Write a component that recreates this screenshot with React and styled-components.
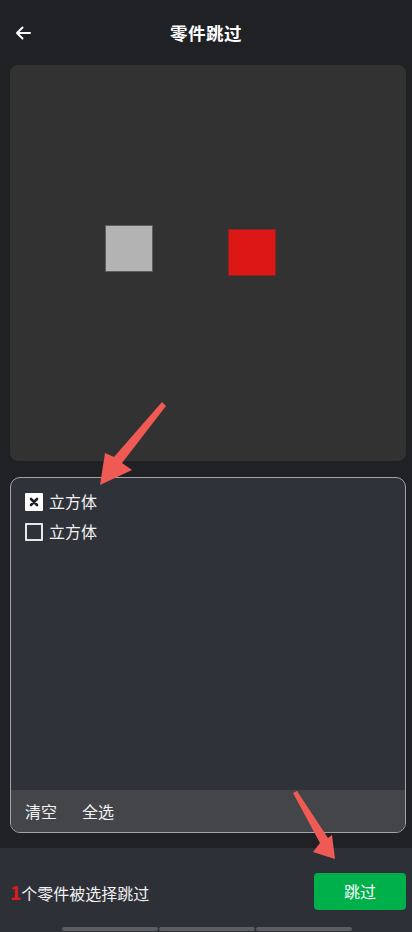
import styled, { createGlobalStyle } from "styled-components";

const GlobalStyle = createGlobalStyle`
  body {
    margin: 0;
    background: #1f2125;
    font-family: "Noto Sans CJK SC", "Noto Sans", sans-serif;
  }
`;

const Page = styled.div`
  position: relative;
  width: 412px;
  height: 932px;
  display: flex;
  flex-direction: column;
  background: #1f2125;
  color: #fff;
  overflow: hidden;
`;

const Header = styled.div`
  height: 65px;
  display: flex;
  align-items: center;
  justify-content: center;
  position: relative;
`;

const Back = styled.div`
  position: absolute;
  left: 14px;
  top: 24px;
  width: 18px;
  height: 18px;
  display: flex;
`;

const Title = styled.h1`
  margin: 0;
  font-size: 17.5px;
  font-weight: 700;
  letter-spacing: 0.5px;
`;

const Main = styled.div`
  padding: 0 6px 0 10px;
  display: flex;
  flex-direction: column;
  gap: 16px;
`;

const Viewport = styled.div`
  position: relative;
  height: 396px;
  background: #323232;
  border-radius: 8px;
`;

const Cube = styled.div`
  position: absolute;
  left: ${(p) => p.$x}px;
  top: ${(p) => p.$y}px;
  width: 48px;
  height: 47px;
  box-sizing: border-box;
  background: ${(p) => p.$color};
  border: 1px solid ${(p) => p.$edge};
`;

const ListPanel = styled.div`
  height: 356px;
  box-sizing: border-box;
  border: 1px solid #a3a4a8;
  border-radius: 10px;
  background: #30323a;
  display: flex;
  flex-direction: column;
  overflow: hidden;
`;

const Items = styled.div`
  flex: 1;
  padding: 14px 14px 0;
  display: flex;
  flex-direction: column;
  gap: 11px;
`;

const Item = styled.div`
  display: flex;
  align-items: center;
  gap: 6px;
  font-size: 16px;
  line-height: 19px;
  color: #f2f2f2;
`;

const Box = styled.div`
  width: 18px;
  height: 18px;
  box-sizing: border-box;
  border-radius: 1px;
  display: flex;
  align-items: center;
  justify-content: center;
  background: ${(p) => (p.$checked ? "#ffffff" : "transparent")};
  border: ${(p) => (p.$checked ? "none" : "2px solid #e8e8e8")};
`;

const ListFooter = styled.div`
  height: 42px;
  background: #444549;
  display: flex;
  align-items: center;
  gap: 25px;
  padding: 0 14px;
  font-size: 16px;
  color: #f2f2f2;
`;

const BottomBar = styled.div`
  margin-top: 15px;
  flex: 1;
  background: #2e3038;
  position: relative;
  display: flex;
  align-items: center;
  justify-content: space-between;
  padding: 2px 6px 0 10px;
`;

const Summary = styled.div`
  font-size: 16px;
  color: #f2f2f2;
`;

const Count = styled.span`
  color: #e01b1b;
  font-weight: 700;
  font-size: 19px;
`;

const SkipButton = styled.button`
  width: 92px;
  height: 37px;
  border: none;
  border-radius: 4px;
  background: #00b04a;
  color: #fff;
  font-family: inherit;
  font-size: 16px;
`;

const HomeBar = styled.div`
  position: absolute;
  left: 62px;
  bottom: 1px;
  width: 290px;
  height: 4px;
  display: flex;
  gap: 1px;
`;

const HomeSeg = styled.div`
  flex: 1;
  background: #5b5d62;
  border-radius: 2px;
`;

const Overlay = styled.svg`
  position: absolute;
  left: 0;
  top: 0;
  pointer-events: none;
`;

function Check({ checked }) {
  return (
    <Box $checked={checked}>
      {checked && (
        <svg width="10" height="10" viewBox="0 0 10 10">
          <path d="M2 2 L8 8 M8 2 L2 8" stroke="#222" strokeWidth="2.6" strokeLinecap="round" />
        </svg>
      )}
    </Box>
  );
}

export default function App() {
  return (
    <Page>
      <GlobalStyle />
      <Header>
        <Back>
          <svg width="18" height="18" viewBox="0 0 18 18" fill="none">
            <path d="M16 9 H3 M8.5 3.5 L3 9 L8.5 14.5" stroke="#fff" strokeWidth="2" strokeLinecap="round" strokeLinejoin="round" />
          </svg>
        </Back>
        <Title>零件跳过</Title>
      </Header>
      <Main>
        <Viewport>
          <Cube $x={95} $y={160} $color="#b3b3b3" $edge="#5e5e5e" />
          <Cube $x={218} $y={164} $color="#dd1616" $edge="#8a2222" />
        </Viewport>
        <ListPanel>
          <Items>
            <Item>
              <Check checked />
              立方体
            </Item>
            <Item>
              <Check />
              立方体
            </Item>
          </Items>
          <ListFooter>
            <span>清空</span>
            <span>全选</span>
          </ListFooter>
        </ListPanel>
      </Main>
      <BottomBar>
        <Summary>
          <Count>1</Count>个零件被选择跳过
        </Summary>
        <SkipButton>跳过</SkipButton>
        <HomeBar>
          <HomeSeg />
          <HomeSeg />
          <HomeSeg />
        </HomeBar>
      </BottomBar>
      <Overlay width="412" height="932" viewBox="0 0 412 932">
        <polygon points="162,402 166,406 122,463 132,470 100,485 105,453 114,457" fill="#f05a55" strokeLinejoin="round" />
        <polygon points="293,793 297,791 328,838 332,835 335,859 313,852 320,843" fill="#f05a55" strokeLinejoin="round" />
      </Overlay>
    </Page>
  );
}
